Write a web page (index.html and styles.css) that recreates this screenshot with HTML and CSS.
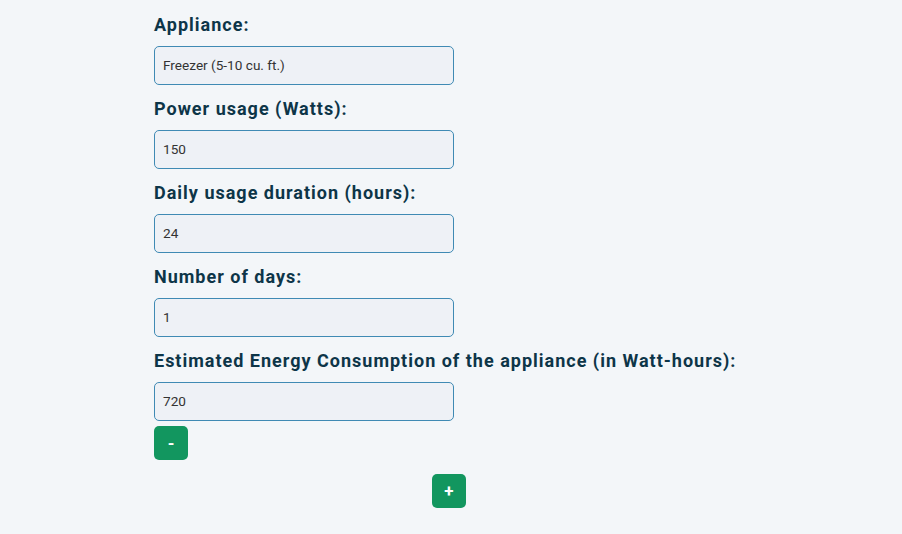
FILE: index.html
```html
<!DOCTYPE html>
<html lang="en">
<head>
    <meta charset="UTF-8">
    <meta name="viewport" content="width=device-width, initial-scale=1.0">
    <title>Energy Calculator</title>
    <link rel="stylesheet" href="styles.css">
</head>
<body>
    <div class="container">
        <div class="appliance">
            <label class="label" for="appliance">Appliance:</label>
            <input class="field" id="appliance" type="text" value="Freezer (5-10 cu. ft.)">

            <label class="label" for="watts">Power usage (Watts):</label>
            <input class="field" id="watts" type="text" value="150">

            <label class="label" for="hours">Daily usage duration (hours):</label>
            <input class="field" id="hours" type="text" value="24">

            <label class="label" for="days">Number of days:</label>
            <input class="field" id="days" type="text" value="1">

            <label class="label" for="total">Estimated Energy Consumption of the appliance (in Watt-hours):</label>
            <input class="field" id="total" type="text" value="720" readonly>

            <button class="button remove">-</button>
        </div>
        <div class="actions">
            <button class="button add">+</button>
        </div>
    </div>
</body>
</html>
```

FILE: styles.css
```css
body {
    font-family: Roboto, "Noto Sans", sans-serif;
    margin: 0;
    padding: 0;
    background-color: #f3f6f9;
    color: #0d3548;
}

.container {
    width: 594px;
    margin: 0 auto;
    padding-top: 14px;
}

.appliance {
    display: flex;
    flex-direction: column;
    align-items: flex-start;
}

.label {
    display: block;
    font-size: 18px;
    font-weight: 700;
    letter-spacing: 1px;
    line-height: 22px;
    margin-bottom: 10px;
}

.field {
    box-sizing: border-box;
    width: 300px;
    height: 39px;
    padding: 0 8px 1px;
    font-family: Roboto, sans-serif;
    font-size: 13.6px;
    color: #333;
    background-color: #eef1f6;
    border: 1px solid #3f8ab4;
    border-radius: 5px;
    margin-bottom: 13px;
    outline: none;
}

.field:last-of-type {
    margin-bottom: 5px;
}

.button {
    width: 34px;
    height: 34px;
    background-color: #12965f;
    color: white;
    border: none;
    border-radius: 5px;
    font-family: Roboto, sans-serif;
    font-size: 17px;
    font-weight: 700;
    cursor: pointer;
    padding: 0;
}

.actions {
    display: flex;
    justify-content: center;
    padding-right: 4px;
    margin-top: 14px;
}
```
